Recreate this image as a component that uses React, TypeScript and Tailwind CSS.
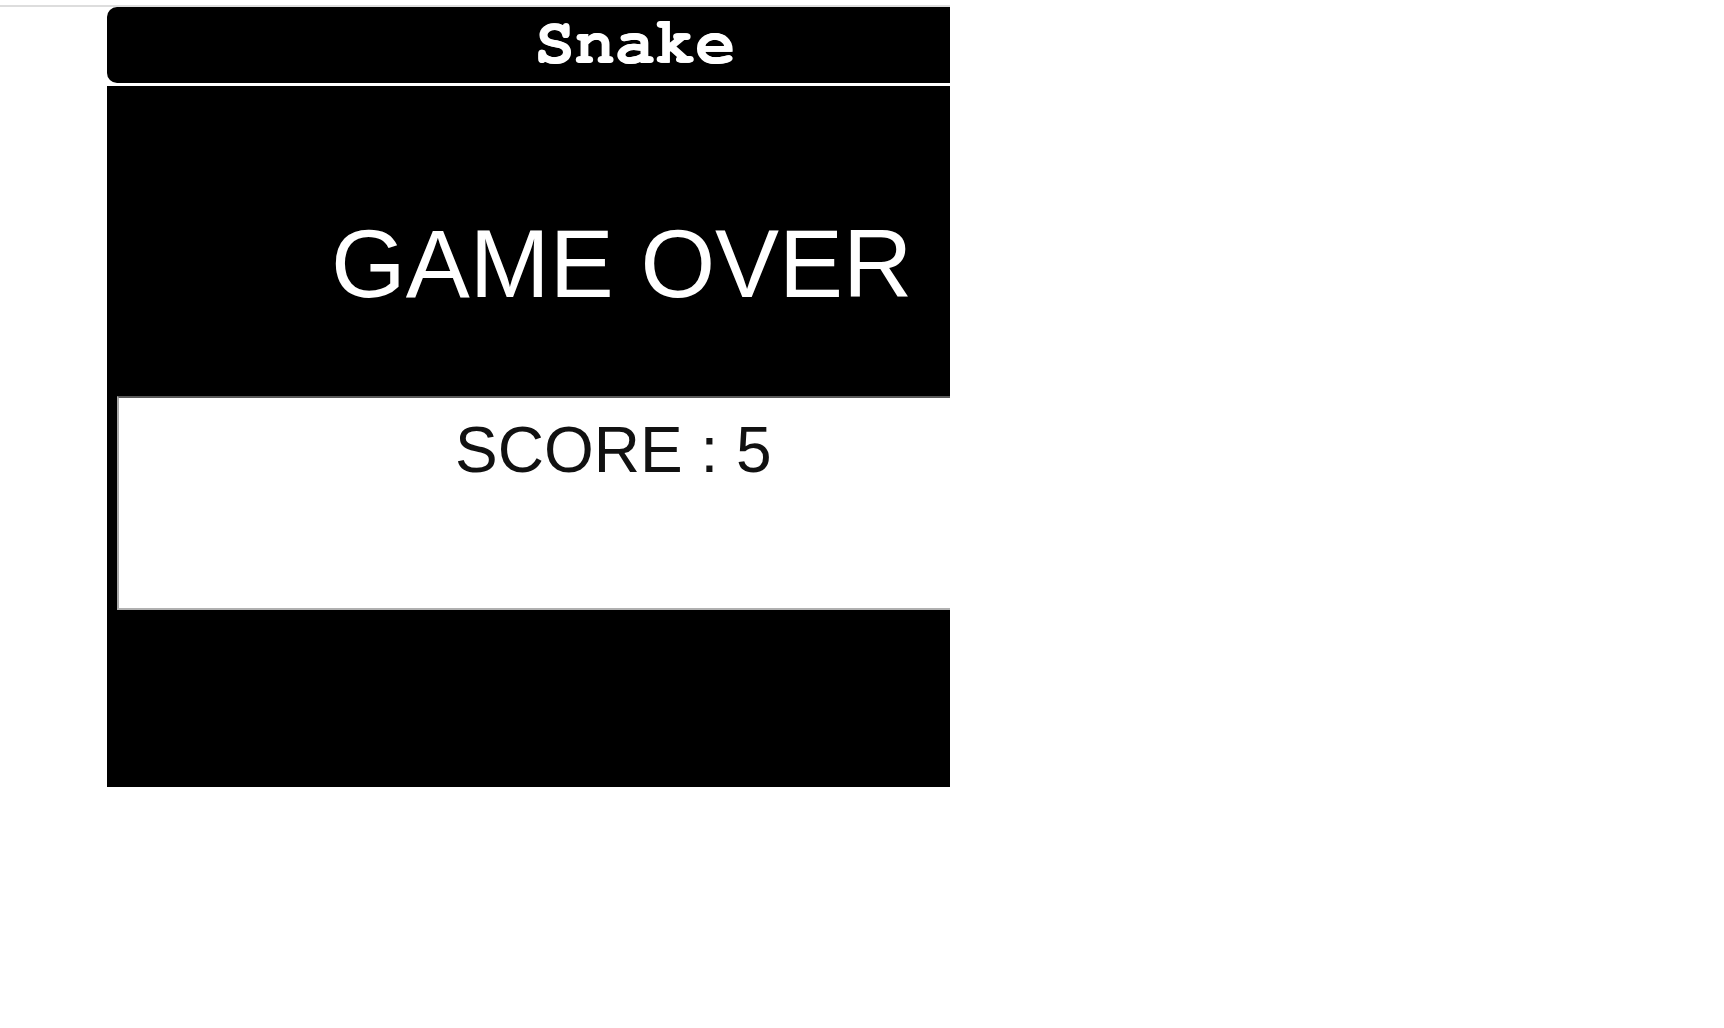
import React from "react";

const App: React.FC = () => {
   const score = 5;

   return (
      <div className="min-h-screen bg-white">
         {/* Frame, clipped on the right */}
         <div className="mt-[5px] w-[950px] overflow-hidden border-t-2 border-[#dddddd] pl-[107px]">
            <div className="w-[1100px]">
               {/* Title bar */}
               <div className="h-[76px] rounded-l-[10px] bg-black pl-[427px] pt-[2px]">
                  <h1 className="font-[Nimbus_Mono_PS,FreeMono,Courier_New,Liberation_Mono,monospace] text-[67px] font-bold leading-none text-white [text-shadow:1px_0_0_#ffffff]">
                     Snake
                  </h1>
               </div>

               {/* Game board */}
               <div className="mt-[3px] h-[701px] bg-black">
                  <div className="h-[310px] pl-[224px] pt-[130px]">
                     <p className="font-[Liberation_Sans,Arial,sans-serif] text-[96px] leading-none text-white">
                        GAME OVER
                     </p>
                  </div>
                  <div className="ml-[10px] h-[214px] border-t-2 border-b-2 border-l-2 border-t-[#5a5a5a] border-b-[#b0b0b0] border-l-[#a8a8a8] bg-white pl-[336px] pt-[20px]">
                     <p className="font-[Liberation_Sans,Arial,sans-serif] text-[64px] leading-none text-[#111111]">
                        SCORE : {score}
                     </p>
                  </div>
               </div>
            </div>
         </div>
      </div>
   );
};

export default App;
